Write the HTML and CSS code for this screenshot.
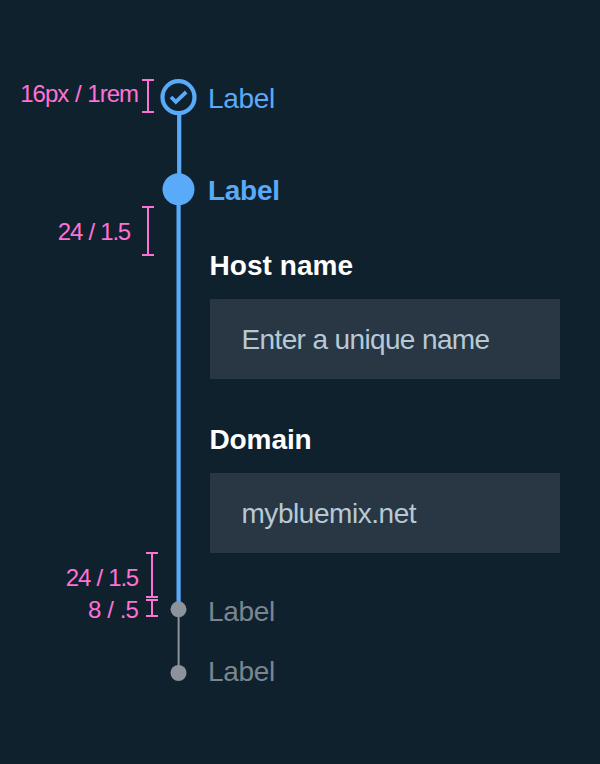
FILE: index.html
```html
<!DOCTYPE html>
<html lang="en">
<head>
<meta charset="utf-8">
<title>Progress indicator spacing</title>
<link rel="stylesheet" href="styles.css">
</head>
<body>
<main class="spec">
  <aside class="measures">
    <div class="measure measure-icon"><span class="value value-rem">16px / 1rem</span><i class="bracket"></i></div>
    <div class="measure measure-above"><span class="value">24 / 1.5</span><i class="bracket"></i></div>
    <div class="measure measure-below"><span class="value">24 / 1.5</span><i class="bracket"></i></div>
    <div class="measure measure-dot"><span class="value">8 / .5</span><i class="bracket"></i></div>
  </aside>
  <svg class="track" width="40" height="764" viewBox="158 0 40 764" fill="none" aria-hidden="true">
    <path class="done" d="M179.2 113V176M178.6 204V604"/>
    <path class="pending" d="M178.6 609V673"/>
    <circle class="done" cx="178.5" cy="97.2" r="16"/>
    <path class="check" d="M171 97L175.8 101.8L186.2 92"/>
    <circle class="current-dot" cx="178.5" cy="189.2" r="16"/>
    <circle class="pending-dot" cx="178.5" cy="609.3" r="8"/>
    <circle class="pending-dot" cx="178.5" cy="673" r="8"/>
  </svg>
  <section class="steps">
    <div class="step complete">Label</div>
    <div class="step current">Label</div>
    <form class="fields">
      <div class="heading host">Host name</div>
      <div class="field"><span class="hint">Enter a unique name</span></div>
      <div class="heading domain">Domain</div>
      <div class="field"><span class="domain-value">mybluemix.net</span></div>
    </form>
    <div class="step upcoming">Label</div>
    <div class="step upcoming">Label</div>
  </section>
</main>
</body>
</html>
```

FILE: styles.css
```css
* { box-sizing: border-box; }
body {
  margin: 0;
  background: #10212e;
  font-family: "Liberation Sans", Arial, sans-serif;
}
.spec {
  display: grid;
  grid-template-columns: 158px 40px 362px;
  height: 764px;
  overflow: hidden;
}
.measures {
  padding-top: 79px;
  color: #ff71d4;
  font-size: 24px;
  line-height: 28px;
  letter-spacing: -1.2px;
  word-spacing: 0.9px;
}
.measure {
  display: flex;
  justify-content: flex-end;
  align-items: flex-start;
  gap: 8px;
}
.value { white-space: nowrap; }
.value-rem { letter-spacing: -1px; word-spacing: 1px; }
.bracket {
  width: 12px;
  height: 100%;
  border: solid #ff71d4;
  border-width: 2px 0;
  background: linear-gradient(#ff71d4, #ff71d4) center / 2px 100% no-repeat;
}
.measure-icon { height: 34px; padding-right: 4px; gap: 4px; }
.measure-icon .value { margin-top: 1px; }
.measure-above { height: 50px; margin-top: 93px; padding-right: 4px; gap: 12px; }
.measure-above .value, .measure-below .value { margin-top: 12px; }
.measure-below { height: 46px; margin-top: 296px; }
.measure-dot { height: 18px; margin-top: 1px; }
.measure-dot .value { margin-top: -3px; letter-spacing: -0.9px; word-spacing: 1px; }
.track { display: block; }
.done { stroke: #5aaafa; stroke-width: 4.2; }
.check { stroke: #5aaafa; stroke-width: 3.8; }
.pending { stroke: #8c939a; stroke-width: 2; }
.current-dot { fill: #5aaafa; }
.pending-dot { fill: #8c939a; }
.steps {
  padding: 83px 0 0 10px;
  font-size: 28px;
  line-height: 32px;
  letter-spacing: -0.3px;
}
.complete { color: #5aaafa; margin-bottom: 60px; }
.current { color: #5aaafa; font-weight: 700; margin-bottom: 43px; }
.upcoming { color: #7b858e; margin-bottom: 28px; }
.fields { margin: 0 0 43px 2px; }
.heading {
  margin: 0 0 17px -0.5px;
  color: #fff;
  font-weight: 700;
  letter-spacing: 0.05px;
}
.domain { margin-top: 45px; letter-spacing: -0.1px; }
.field {
  height: 80px;
  padding: 1px 0 0 31.5px;
  background: #283743;
  color: #b8c9d6;
  line-height: 80px;
  white-space: nowrap;
}
.hint { letter-spacing: -0.63px; }
.domain-value { letter-spacing: -0.45px; }
```
